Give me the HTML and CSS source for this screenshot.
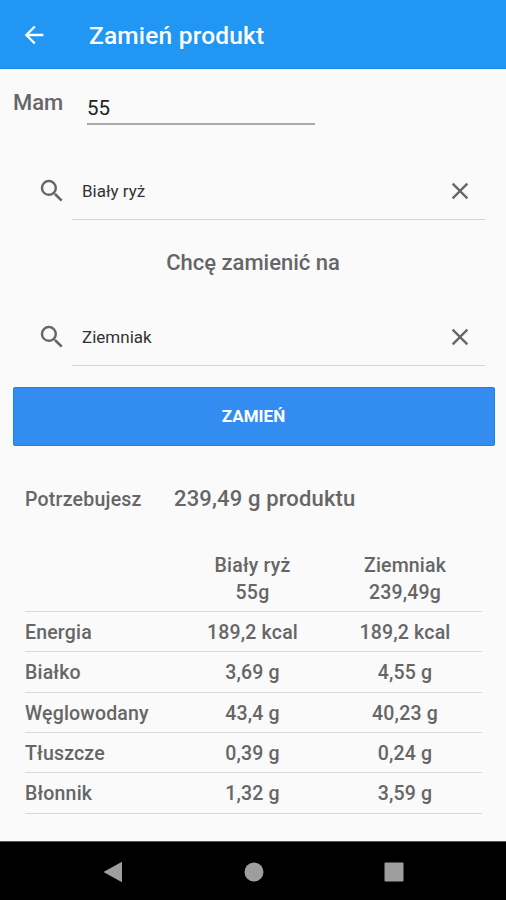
FILE: index.html
```
<!DOCTYPE html>
<html lang="pl">
<head>
<meta charset="utf-8">
<title>Zamień produkt</title>
<link rel="stylesheet" href="styles.css">
</head>
<body>
<header class="app-bar">
  <svg class="back" viewBox="0 0 24 24"><path d="M20 11H7.83l5.59-5.59L12 4l-8 8 8 8 1.41-1.41L7.83 13H20v-2z"/></svg>
  <h1 class="title">Zamień produkt</h1>
</header>
<main class="content">
  <div class="amount">
    <label class="amount-label">Mam</label>
    <div class="amount-field">55</div>
  </div>
  <div class="search">
    <svg class="search-icon" viewBox="0 0 24 24"><path d="M15.5 14h-.79l-.28-.27A6.47 6.47 0 0 0 16 9.500 6.500 6.500 0 1 0 9.500 16c1.610 0 3.090-.59 4.230-1.570l.27.28v.79l5 4.990L20.490 19l-4.990-5zm-6 0C7.010 14 5 11.990 5 9.500S7.010 5 9.500 5 14 7.010 14 9.500 11.990 14 9.500 14z"/></svg>
    <div class="search-field"><span>Biały ryż</span>
      <svg class="clear" viewBox="0 0 24 24"><path d="M19 6.410L17.590 5 12 10.590 6.410 5 5 6.410 10.590 12 5 17.590 6.410 19 12 13.410 17.590 19 19 17.590 13.410 12z"/></svg>
    </div>
  </div>
  <h2 class="swap-label">Chcę zamienić na</h2>
  <div class="search">
    <svg class="search-icon" viewBox="0 0 24 24"><path d="M15.5 14h-.79l-.28-.27A6.47 6.47 0 0 0 16 9.500 6.500 6.500 0 1 0 9.500 16c1.610 0 3.090-.59 4.230-1.570l.27.28v.79l5 4.990L20.490 19l-4.990-5zm-6 0C7.010 14 5 11.990 5 9.500S7.010 5 9.500 5 14 7.010 14 9.500 11.990 14 9.500 14z"/></svg>
    <div class="search-field"><span>Ziemniak</span>
      <svg class="clear" viewBox="0 0 24 24"><path d="M19 6.410L17.590 5 12 10.590 6.410 5 5 6.410 10.590 12 5 17.590 6.410 19 12 13.410 17.590 19 19 17.590 13.410 12z"/></svg>
    </div>
  </div>
  <button class="submit">ZAMIEŃ</button>
  <div class="result">
    <span class="result-label">Potrzebujesz</span>
    <span class="result-value">239,49 g produktu</span>
  </div>
  <div class="table">
    <div class="row head"><span></span><span>Biały ryż<br>55g</span><span>Ziemniak<br>239,49g</span></div>
    <div class="row"><span>Energia</span><span>189,2 kcal</span><span>189,2 kcal</span></div>
    <div class="row"><span>Białko</span><span>3,69 g</span><span>4,55 g</span></div>
    <div class="row"><span>Węglowodany</span><span>43,4 g</span><span>40,23 g</span></div>
    <div class="row"><span>Tłuszcze</span><span>0,39 g</span><span>0,24 g</span></div>
    <div class="row"><span>Błonnik</span><span>1,32 g</span><span>3,59 g</span></div>
  </div>
</main>
<nav class="nav-bar">
  <svg viewBox="0 0 24 24"><path d="M1.500 12 20 1.700v20.600z"/></svg>
  <svg viewBox="0 0 24 24"><circle cx="12" cy="12" r="9.500"/></svg>
  <svg viewBox="0 0 24 24"><rect x="2.500" y="2.500" width="19" height="19" rx="1"/></svg>
</nav>
</body>
</html>
```
FILE: styles.css
```
* { box-sizing: border-box; }
body {
  margin: 0;
  width: 506px;
  height: 900px;
  display: flex;
  flex-direction: column;
  overflow: hidden;
  background: #fafafa;
  color: #666;
  font-family: Roboto, "Liberation Sans", sans-serif;
  font-weight: 500;
  white-space: nowrap;
}
.app-bar {
  height: 69px;
  flex: none;
  display: flex;
  align-items: center;
  padding: 2px 0 0 20px;
  background: #2196f3;
  border-bottom: 1px solid #1a88e6;
  color: #fff;
}
.back { width: 28px; height: 28px; margin-right: 41px; fill: #fff; }
.title { margin: 0; font-size: 24.500px; font-weight: 500; line-height: 30px; padding-top: 2px; letter-spacing: .18px; }
.content { flex: 1; }
.amount { display: flex; height: 57px; padding-left: 13px; }
.amount-label { width: 74px; font-size: 22px; line-height: 26px; padding-top: 21px; }
.amount-field {
  width: 228px;
  height: 56px;
  border-bottom: 2px solid #aaa;
  color: #222;
  font-size: 20.500px;
  font-weight: 400;
  line-height: 26px;
  padding-top: 26px;
}
.search { display: flex; height: 59px; margin-top: 35px; padding-left: 37px; }
.search-icon { width: 30px; height: 30px; margin-top: 14.500px; fill: #666; }
.search-field {
  width: 412.500px;
  height: 59px;
  margin-left: 5px;
  padding: 1px 10.500px 0 10px;
  border-bottom: 1px solid #d4d4d4;
  display: flex;
  justify-content: space-between;
  align-items: center;
  color: #333;
  font-size: 17px;
  font-weight: 400;
}
.search-field span { padding-top: 1px; }
.clear { width: 28px; height: 28px; fill: #666; }
.swap-label { margin: 0; padding-top: 30px; height: 52px; font-size: 22px; line-height: 26px; font-weight: 500; text-align: center; }
.submit {
  display: block;
  width: 482px;
  height: 59px;
  margin: 20.500px 0 0 12.500px;
  padding: 0;
  border: 1px solid #1883e6;
  border-radius: 2px;
  background: #338cf0;
  color: #fff;
  font: 700 17px/57px Roboto, "Liberation Sans", sans-serif;
}
.result { display: flex; align-items: baseline; height: 92.500px; padding: 40.500px 0 0 25px; }
.result-label { width: 149px; font-size: 19.500px; line-height: 26px; letter-spacing: .23px; }
.result-value { font-size: 22px; line-height: 26px; letter-spacing: .15px; }
.table { margin: 0 24px 0 25px; font-size: 19.500px; letter-spacing: .18px; }
.row {
  display: grid;
  grid-template-columns: 151px 153px 152px;
  height: 40.350px;
  border-bottom: 1.500px solid #d9d9d9;
  line-height: 42px;
}
.row span + span { text-align: center; }
.head { height: 74px; line-height: 27px; padding-top: 14px; }
.nav-bar {
  height: 59px;
  flex: none;
  display: flex;
  align-items: center;
  padding: 1px 0 0 101.500px;
  gap: 116px;
  background: #000;
  border-top: 1px solid #555;
}
.nav-bar svg { width: 24px; height: 24px; fill: #9e9e9e; }
```
